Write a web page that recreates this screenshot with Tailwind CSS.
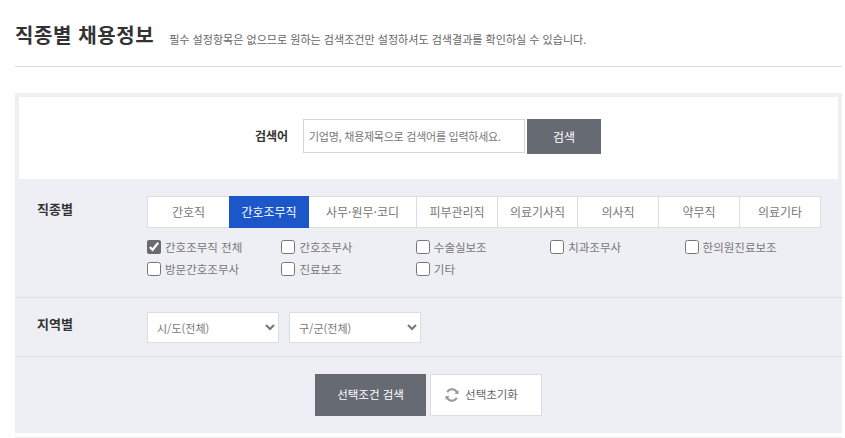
<!DOCTYPE html>
<html lang="ko">
<head>
    <meta charset="UTF-8">
    <title>직종별 채용정보</title>
    <script src="https://cdn.jsdelivr.net/npm/@tailwindcss/browser@4"></script>
</head>
<body class="bg-white overflow-hidden font-['Noto_Sans_CJK_KR','Noto_Sans',sans-serif] text-[#333]">
<div class="w-[845px] h-[438px] pl-[15px] pr-[3px]">

    <!-- Title -->
    <div class="h-[67px] border-b border-[#dddddd] flex items-start pt-[19px]">
        <h1 class="text-[20px] leading-[32px] font-bold text-[#333] tracking-[0.6px]">직종별 채용정보</h1>
        <p class="ml-[15px] mt-[10px] text-[11.06px] leading-[20px] text-[#666]">필수 설정항목은 없으므로 원하는 검색조건만 설정하셔도 검색결과를 확인하실 수 있습니다.</p>
    </div>

    <!-- Filter panel -->
    <div class="mt-[26px] bg-[#eeeff5] h-[340px]">

        <!-- Keyword -->
        <div class="mx-[4px] pt-[4px]">
            <div class="bg-white h-[82px] flex items-start pt-[22px] pl-[236px]">
                <label class="w-[48px] text-[12px] leading-[34px] font-bold text-[#333]">검색어</label>
                <input type="text" placeholder="기업명, 채용제목으로 검색어를 입력하세요." class="w-[222px] h-[34px] border border-[#d5d5d5] bg-white px-[5px] text-[11px] tracking-[-0.25px] text-[#666] placeholder:text-[#777]">
                <button class="ml-[2px] w-[74px] h-[35px] bg-[#666a73] text-white text-[12px]">검색</button>
            </div>
        </div>

        <!-- Job type -->
        <div class="h-[118px] mt-[1px] border-b border-[#dddfe6] flex items-start pt-[16px]">
            <div class="w-[132px] pl-[22px] text-[13px] leading-[26px] font-bold text-[#333]">직종별</div>
            <div class="w-[675px]">
                <div class="grid grid-cols-[81px_80px_108px_81px_80px_81px_81px_1fr] w-[674px] h-[32px] bg-white border border-[#dddddd] text-[12px] text-[#777] text-center leading-[30px]">
                    <div>간호직</div>
                    <div class="bg-[#1b57c9] text-white -my-[1px] leading-[32px]">간호조무직</div>
                    <div class="border-r border-[#dddddd]">사무·원무·코디</div>
                    <div class="border-r border-[#dddddd]">피부관리직</div>
                    <div class="border-r border-[#dddddd]">의료기사직</div>
                    <div class="border-r border-[#dddddd]">의사직</div>
                    <div class="border-r border-[#dddddd]">약무직</div>
                    <div>의료기타</div>
                </div>
                <div class="grid grid-cols-5 gap-y-[8px] w-[672px] mt-[12px] text-[11.5px] leading-[14px] text-[#777]">
                    <label class="flex items-center gap-[4px]"><input type="checkbox" checked class="m-0 w-[14px] h-[14px] accent-[#6b6b6b]">간호조무직 전체</label>
                    <label class="flex items-center gap-[4px]"><input type="checkbox" class="m-0 w-[14px] h-[14px]">간호조무사</label>
                    <label class="flex items-center gap-[4px]"><input type="checkbox" class="m-0 w-[14px] h-[14px]">수술실보조</label>
                    <label class="flex items-center gap-[4px]"><input type="checkbox" class="m-0 w-[14px] h-[14px]">치과조무사</label>
                    <label class="flex items-center gap-[4px]"><input type="checkbox" class="m-0 w-[14px] h-[14px]">한의원진료보조</label>
                    <label class="flex items-center gap-[4px]"><input type="checkbox" class="m-0 w-[14px] h-[14px]">방문간호조무사</label>
                    <label class="flex items-center gap-[4px]"><input type="checkbox" class="m-0 w-[14px] h-[14px]">진료보조</label>
                    <label class="flex items-center gap-[4px]"><input type="checkbox" class="m-0 w-[14px] h-[14px]">기타</label>
                </div>
            </div>
        </div>

        <!-- Region -->
        <div class="h-[59px] border-b border-[#dddfe6] flex items-start pt-[14px]">
            <div class="w-[132px] pl-[22px] text-[13px] leading-[24px] font-bold text-[#333]">지역별</div>
            <div class="flex gap-[10px]">
                <select class="w-[132px] h-[31px] bg-white border border-[#dddddd] pl-[5px] text-[11px] text-[#777]"><option>시/도(전체)</option></select>
                <select class="w-[132px] h-[31px] bg-white border border-[#dddddd] pl-[5px] text-[11px] text-[#777]"><option>구/군(전체)</option></select>
            </div>
        </div>

        <!-- Actions -->
        <div class="flex justify-center items-start pt-[17px] gap-[4px]">
            <button class="w-[111px] h-[42px] bg-[#666a73] text-white text-[11.5px]">선택조건 검색</button>
            <button class="w-[112px] h-[42px] bg-white border border-[#dddddd] text-[#666] text-[11.5px] flex items-center justify-center gap-[5px] pr-[10px]">
                <svg width="16" height="16" viewBox="0 0 16 16" fill="none" stroke="#999" stroke-width="2">
                    <path d="M3.2 5.2A5.5 5.5 0 0 1 13 5.5"/>
                    <path d="M12.8 10.8A5.5 5.5 0 0 1 3 10.5"/>
                    <path d="M14.5 3v4h-4z" fill="#999" stroke="none"/>
                    <path d="M1.5 13V9h4z" fill="#999" stroke="none"/>
                </svg>
                선택초기화
            </button>
        </div>
    </div>

    <div class="mt-[4px] border-t border-[#eeeeee]"></div>
</div>
</body>
</html>
